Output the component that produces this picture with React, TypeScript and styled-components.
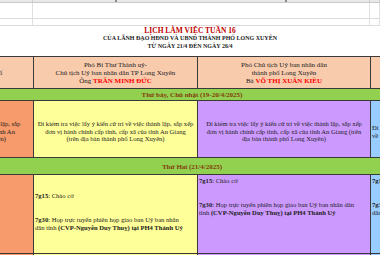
import styled, { createGlobalStyle } from 'styled-components';

const GlobalStyle = createGlobalStyle`
  html, body {
    margin: 0;
    padding: 0;
    background: #fff;
  }
  body {
    font-family: "Liberation Serif", "Times New Roman", serif;
    color: #1c1c1c;
    overflow: hidden;
  }
`;

const Sheet = styled.div`
  width: 380px;
  height: 255px;
  overflow: hidden;
`;

const ColHeads = styled.div`
  display: grid;
  grid-template-columns: 33px 337px 1fr;
  height: 2px;
  background: #e8e8e8;
  border-bottom: 1px solid #c9c9c9;
`;

const ColHead = styled.div`
  border-right: 1px solid #cfcfcf;
  display: flex;
  justify-content: center;
  gap: 168px;
`;

const Tick = styled.span`
  width: 2px;
  height: 2px;
  background: #8a8a8a;
`;

const BlankRow = styled.div<{ $h: number }>`
  display: grid;
  grid-template-columns: 33px 337px 1fr;
  height: ${(p) => p.$h}px;
  border-bottom: 1px solid #dcdcdc;
`;

const BlankCell = styled.div`
  border-right: 1px solid #e0e0e0;
`;

const Title = styled.div`
  height: 30px;
  padding-top: 1px;
  box-sizing: border-box;
  text-align: center;
  font-weight: bold;
`;

const TitleMain = styled.div`
  color: #c00000;
  font-size: 7.5px;
  line-height: 8px;
`;

const TitleSub = styled.div<{ $lh: number }>`
  font-size: 6px;
  line-height: ${(p) => p.$lh}px;
  color: #1a1a1a;
`;

const Table = styled.div`
  display: grid;
  grid-template-columns: 170px 163px 172px 170px;
  grid-template-rows: 31px 11px 56px 16px 78px 40px;
  gap: 1px;
  width: max-content;
  margin-left: -137px;
  background: #3a3a3a;
  border-top: 1px solid #3a3a3a;
`;

const Cell = styled.div<{ $bg: string; $align?: 'center' | 'left'; $top?: boolean; $pt?: number }>`
  background: ${(p) => p.$bg};
  display: flex;
  flex-direction: column;
  justify-content: ${(p) => (p.$top ? 'flex-start' : 'center')};
  align-items: ${(p) => (p.$align === 'left' ? 'flex-start' : 'center')};
  text-align: ${(p) => p.$align ?? 'center'};
  padding: ${(p) => p.$pt ?? 0}px 2px 0 ${(p) => (p.$align === 'left' ? 1 : 2)}px;
  overflow: hidden;
  font-size: 6.6px;
  line-height: 7.4px;
  white-space: nowrap;
`;

const HeadCell = styled(Cell)`
  font-size: 7px;
  line-height: 8px;
`;

const Name = styled.span`
  color: #ff0000;
  font-weight: bold;
`;

const Band = styled.div<{ $pt: number }>`
  grid-column: 1 / -1;
  background: #92d050;
  color: #843c0c;
  font-weight: bold;
  font-size: 7px;
  line-height: 8px;
  display: flex;
  justify-content: center;
  padding: ${(p) => p.$pt}px 20px 0 0;
`;

const Entry = styled.div<{ $gap?: number }>`
  margin-top: ${(p) => p.$gap ?? 0}px;
`;

const B = styled.b`
  font-weight: bold;
`;

const PEACH = '#f8cbad';
const ORANGE = '#f79b6c';
const YELLOW = '#ffff99';
const PURPLE = '#cc99ff';
const BLUE = '#99ccff';

const visitLines = [
  'Đi kiểm tra việc lấy ý kiến cử tri về việc thành lập, sắp xếp',
  'đơn vị hành chính cấp tỉnh, cấp xã của tỉnh An Giang',
  '(trên địa bàn thành phố Long Xuyên)',
];

const Lines = ({ lines }: { lines: string[] }) => (
  <>
    {lines.map((l) => (
      <div key={l}>{l}</div>
    ))}
  </>
);

// narrow columns break the 7g30 line one word earlier
const Meeting = ({ narrow }: { narrow?: boolean }) => (
  <>
    <Entry>
      <B>7g15</B>: Chào cờ
    </Entry>
    <Entry $gap={17}>
      <B>7g30</B>: Họp trực tuyến phiên họp giao ban Uỷ ban nhân{narrow ? '' : ' dân'}
      <br />
      {narrow ? 'dân tỉnh ' : 'tỉnh '}
      <B>(CVP-Nguyễn Duy Thuỵ) tại PH4 Thành Uỷ</B>
    </Entry>
  </>
);

const App = () => {
  return (
    <>
      <GlobalStyle />
      <Sheet>
        <ColHeads>
          <ColHead />
          <ColHead>
            <Tick />
            <Tick />
          </ColHead>
          <ColHead />
        </ColHeads>
        <BlankRow $h={15}>
          <BlankCell />
          <BlankCell />
          <BlankCell />
        </BlankRow>
        <BlankRow $h={6}>
          <BlankCell />
          <BlankCell />
          <BlankCell />
        </BlankRow>
        <Title>
          <TitleMain>LỊCH LÀM VIỆC TUẦN 16</TitleMain>
          <TitleSub $lh={7}>CỦA LÃNH ĐẠO HĐND VÀ UBND THÀNH PHỐ LONG XUYÊN</TitleSub>
          <TitleSub $lh={9}>TỪ NGÀY 21/4 ĐẾN NGÀY 26/4</TitleSub>
        </Title>
        <Table>
          <HeadCell $bg={PEACH}>
            <div>Phó Bí thư Thường trực Thành uỷ -</div>
            <div>Chủ tịch Hội đồng nhân dân thành phố</div>
            <div>&nbsp;</div>
          </HeadCell>
          <HeadCell $bg={PEACH}>
            <div>Phó Bí Thư Thành uỷ-</div>
            <div>Chủ tịch Uỷ ban nhân dân TP Long Xuyên</div>
            <div>
              Ông <Name>TRẦN MINH ĐỨC</Name>
            </div>
          </HeadCell>
          <HeadCell $bg={PEACH}>
            <div>Phó Chủ tịch Uỷ ban nhân dân</div>
            <div>thành phố Long Xuyên</div>
            <div>
              Bà <Name>VÕ THỊ XUÂN KIỀU</Name>
            </div>
          </HeadCell>
          <HeadCell $bg={PEACH} />

          <Band $pt={2}>Thứ bảy, Chủ nhật (19-20/4/2025)</Band>

          <Cell $bg={ORANGE} $pt={5}>
            <Lines
              lines={[
                'Đi kiểm tra việc lấy ý kiến cử tri về việc thành lập, sắp',
                'xếp đơn vị hành chính cấp tỉnh, cấp xã của tỉnh An',
                'Giang (trên địa bàn thành phố Long Xuyên)',
              ]}
            />
          </Cell>
          <Cell $bg={YELLOW} $pt={5}>
            <Lines lines={visitLines} />
          </Cell>
          <Cell $bg={PURPLE} $pt={5}>
            <Lines
              lines={[
                'Đi kiểm tra việc lấy ý kiến cử tri về việc thành lập, sắp xếp',
                'đơn vị hành chính cấp tỉnh, cấp xã của tỉnh An Giang (trên',
                'địa bàn thành phố Long Xuyên)',
              ]}
            />
          </Cell>
          <Cell $bg={BLUE} $align="left" $pt={5}>
            <Lines
              lines={[
                'Đi kiểm tra việc lấy ý kiến cử tri về việc thành lập, sắp xếp',
                '  về việc thành lập',
              ]}
            />
          </Cell>

          <Band $pt={4.5}>Thứ Hai (21/4/2025)</Band>

          <Cell $bg={ORANGE} />
          <Cell $bg={YELLOW} $align="left" $top $pt={17}>
            <Meeting narrow />
          </Cell>
          <Cell $bg={PURPLE} $align="left" $top $pt={2}>
            <Meeting />
          </Cell>
          <Cell $bg={BLUE} $align="left" $top $pt={2}>
            <Meeting narrow />
          </Cell>

          <Cell $bg={ORANGE} />
          <Cell $bg={YELLOW} />
          <Cell $bg={PURPLE} />
          <Cell $bg={BLUE} />
        </Table>
      </Sheet>
    </>
  );
};

export default App;
